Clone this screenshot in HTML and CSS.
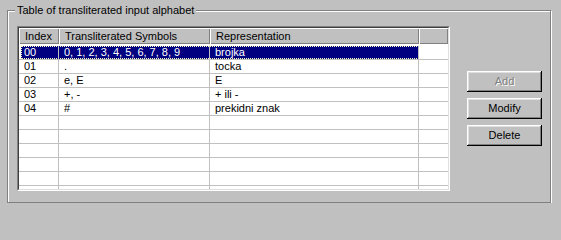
FILE: index.html
```html
<!DOCTYPE html>
<html>
<head>
<meta charset="utf-8">
<link rel="stylesheet" href="styles.css">
</head>
<body>
<div class="group">
  <div class="group-title">Table of transliterated input alphabet</div>
  <div class="group-body">
    <div class="listview">
      <div class="listview-inner">
        <div class="lv-header">
          <div class="hd c1">Index</div>
          <div class="hd c2">Transliterated Symbols</div>
          <div class="hd c3">Representation</div>
          <div class="hd c4"></div>
        </div>
        <div class="lv-body">
          <div class="lv-row selected"><span class="cell c1">00</span><span class="cell c2">0, 1, 2, 3, 4, 5, 6, 7, 8, 9</span><span class="cell c3">brojka</span><span class="cell c4"></span></div>
          <div class="lv-row"><span class="cell c1">01</span><span class="cell c2">.</span><span class="cell c3">tocka</span><span class="cell c4"></span></div>
          <div class="lv-row"><span class="cell c1">02</span><span class="cell c2">e, E</span><span class="cell c3">E</span><span class="cell c4"></span></div>
          <div class="lv-row"><span class="cell c1">03</span><span class="cell c2">+, -</span><span class="cell c3">+ ili -</span><span class="cell c4"></span></div>
          <div class="lv-row"><span class="cell c1">04</span><span class="cell c2">#</span><span class="cell c3">prekidni znak</span><span class="cell c4"></span></div>
          <div class="lv-row"><span class="cell c1"></span><span class="cell c2"></span><span class="cell c3"></span><span class="cell c4"></span></div>
          <div class="lv-row"><span class="cell c1"></span><span class="cell c2"></span><span class="cell c3"></span><span class="cell c4"></span></div>
          <div class="lv-row"><span class="cell c1"></span><span class="cell c2"></span><span class="cell c3"></span><span class="cell c4"></span></div>
          <div class="lv-row"><span class="cell c1"></span><span class="cell c2"></span><span class="cell c3"></span><span class="cell c4"></span></div>
          <div class="lv-row"><span class="cell c1"></span><span class="cell c2"></span><span class="cell c3"></span><span class="cell c4"></span></div>
          <div class="lv-row"><span class="cell c1"></span><span class="cell c2"></span><span class="cell c3"></span><span class="cell c4"></span></div>
        </div>
      </div>
    </div>
    <div class="buttons">
      <button class="btn" disabled>Add</button>
      <button class="btn">Modify</button>
      <button class="btn">Delete</button>
    </div>
  </div>
</div>
</body>
</html>
```
FILE: styles.css
```css
* { box-sizing: border-box; }

html, body {
  margin: 0;
  background: #c0c0c0;
}

body {
  padding: 10px 0 0 7px;
  font: 11px/13px "Liberation Sans", Arial, sans-serif;
  color: #000;
}

.group {
  width: 544px;
  height: 193px;
  border: 1px solid #808080;
  box-shadow: inset 1px 1px 0 #fff, 1px 1px 0 #fff;
  padding: 0 0 11px 9px;
}

.group-title {
  display: table;
  margin: -7px 0 0 -2px;
  padding: 0 2px;
  height: 13px;
  background: #c0c0c0;
  white-space: nowrap;
}

.group-body {
  display: flex;
  align-items: flex-start;
  margin-top: 9px;
}

.listview {
  width: 433px;
  height: 165px;
  border: 1px solid;
  border-color: #808080 #fff #fff #808080;
  flex: none;
}

.listview-inner {
  height: 100%;
  border: 1px solid;
  border-color: #404040 #dfdfdf #dfdfdf #404040;
  background: #fff;
  overflow: hidden;
}

.lv-header,
.lv-row {
  display: grid;
  grid-template-columns: 40px 151px 209px 1fr;
}

.lv-header {
  height: 16px;
  background: #c0c0c0;
}

.hd {
  padding: 2px 0 0 6px;
  box-shadow: inset 1px 1px 0 #fff, inset -1px -1px 0 #808080;
  white-space: nowrap;
  overflow: hidden;
}

.lv-body {
  padding-top: 2px;
}

.lv-row {
  height: 14px;
}

.cell {
  grid-row: 1;
  height: 14px;
  padding-left: 5px;
  border-bottom: 1px solid #c0c0c0;
  border-right: 1px solid #c0c0c0;
  white-space: nowrap;
  overflow: hidden;
}

.c1 { grid-column: 1; }
.c2 { grid-column: 2; }
.c3 { grid-column: 3; }
.c4 { grid-column: 4; border-right: none; }

.lv-row.selected::before {
  content: "";
  grid-column: 1 / 4;
  grid-row: 1;
  margin: 0 0 1px 2px;
  background: #000080;
  outline: 1px dotted #ffffc0;
  outline-offset: -1px;
}

.lv-row.selected .c1,
.lv-row.selected .c2,
.lv-row.selected .c3 {
  color: #fff;
}

.buttons {
  display: flex;
  flex-direction: column;
  gap: 6px;
  margin: 45px 0 0 17px;
}

.btn {
  width: 75px;
  height: 21px;
  padding: 0;
  border: none;
  background: #c0c0c0;
  font: inherit;
  color: #000;
  box-shadow: inset -1px -1px 0 #000, inset 1px 1px 0 #fff, inset -2px -2px 0 #808080, inset 2px 2px 0 #dfdfdf;
}

.btn:disabled {
  color: #808080;
  text-shadow: 1px 1px 0 #fff;
}
```
